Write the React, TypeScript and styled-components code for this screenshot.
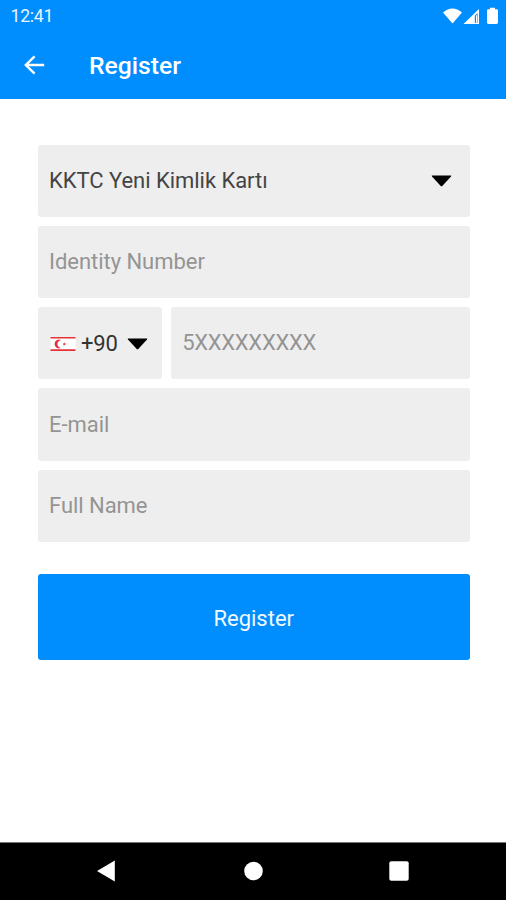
import React from 'react';
import styled, { createGlobalStyle } from 'styled-components';

const GlobalStyle = createGlobalStyle`
  * { box-sizing: border-box; }
  body { margin: 0; background: #fff; font-family: Roboto, sans-serif; }
  svg { display: block; flex: none; }
`;

const Screen = styled.div`
  width: 506px;
  height: 900px;
  display: flex;
  flex-direction: column;
  background: #fff;
  overflow: hidden;
`;

const Header = styled.header`
  height: 98.5px;
  flex: none;
  background: #008eff;
  color: #fff;
`;

const StatusBar = styled.div`
  height: 32px;
  display: flex;
  align-items: center;
  justify-content: space-between;
  padding: 0 7px 1px 10.5px;
`;

const Clock = styled.span`
  font-size: 17.6px;
  line-height: 32px;
  letter-spacing: -0.25px;
  color: #e6f4ff;
`;

const AppBar = styled.div`
  height: 66px;
  display: flex;
  align-items: center;
  padding: 0 0 1px 23px;
  gap: 44px;
`;

const Title = styled.h1`
  margin: 0;
  font-size: 24.7px;
  line-height: 32px;
  font-weight: 500;
  padding-top: 2px;
`;

const BackButton = styled.button`
  display: flex;
  border: 0;
  padding: 0;
  background: none;
`;

const Form = styled.form`
  flex: 1;
  padding: 46px 36.5px 0 38px;
  display: flex;
  flex-direction: column;
  gap: 9px;
`;

const Row = styled.div`
  display: flex;
  gap: 9px;
`;

const Field = styled.div<{ $tone?: string; $tracking?: number }>`
  height: 72.3px;
  flex: 1 0 0;
  display: flex;
  align-items: center;
  justify-content: space-between;
  padding: 0 18px 0 11px;
  border-radius: 3px;
  background: #eee;
  color: ${p => p.$tone ?? '#949494'};
  font-size: 22px;
  line-height: 30px;
  letter-spacing: ${p => p.$tracking ?? -0.04}px;
  white-space: nowrap;
`;

const DialCode = styled(Field)`
  flex: 0 0 124.2px;
  justify-content: flex-start;
  padding: 1px 0 0 12px;
`;

const DialNumber = styled.span`
  margin: 1px 9px 0 5px;
`;

const Submit = styled.button`
  height: 86px;
  margin: 23px -0.5px 0;
  border: 0;
  border-radius: 3px;
  background: #008eff;
  color: #f2f9ff;
  font: 400 22px/30px Roboto, sans-serif;
  padding: 4px 0 0;
`;

const NavBar = styled.nav`
  height: 58.5px;
  flex: none;
  display: flex;
  align-items: center;
  justify-content: space-between;
  padding: 0 97px 0 96px;
  background: #000;
  border-top: 1px solid #777;
`;

const Caret = () => (
  <svg width="21" height="12" viewBox="0 0 21 12">
    <path d="M1 .6H20Q20.6 .8 20 1.6L11.5 10.8Q10.5 11.8 9.5 10.8L1 1.6Q.4 .8 1 .6Z" fill="#000" />
  </svg>
);

const Flag = () => (
  <svg width="26" height="16" viewBox="0 0 26 16">
    <path d="M.5 1h25v14H.5z" fill="#fff" />
    <path d="M.5 1h25v1.6H.5zM.5 13.3h25v1.7H.5z" fill="#e5323a" />
    <path d="M10.8 4A4.4 4.4 0 1 0 10.8 12A5 5 0 0 1 7.2 8A5 5 0 0 1 10.8 4Z" fill="#e5323a" />
    <path d="M14.3 6.3l.5 1.1 1.2.1-.9.8.3 1.2-1.1-.6-1.1.6.3-1.2-.9-.8 1.2-.1z" fill="#e5323a" />
  </svg>
);

const StatusIcons = () => (
  <svg width="57" height="20" viewBox="442 5 57 20" fill="#fff">
    <path d="M443 11.4Q452.5 3.6 462 11.4L452.5 22.5Z" />
    <path fillRule="evenodd" d="M463.5 23L479 8V23ZM474.8 14.6V21.8H477.6V12Z" />
    <path d="M476 14.2h1.1v7.3H476z" />
    <path d="M490 6.7h5v1.6h1.7q1.3 0 1.3 1.3v12q0 1.3-1.3 1.3h-8.4q-1.3 0-1.3-1.3v-12q0-1.3 1.3-1.3H490z" />
  </svg>
);

export default function App() {
  return (
    <Screen>
      <GlobalStyle />
      <Header>
        <StatusBar>
          <Clock>12:41</Clock>
          <StatusIcons />
        </StatusBar>
        <AppBar>
          <BackButton type="button" aria-label="Back">
            <svg width="22" height="20" viewBox="0 0 22 20" fill="none" stroke="#fff" strokeWidth="2.4">
              <path d="M21.2 10H3M11.6 1.3L2.8 10L11.6 18.7" />
            </svg>
          </BackButton>
          <Title>Register</Title>
        </AppBar>
      </Header>
      <Form>
        <Row>
          <Field $tone="#444">KKTC Yeni Kimlik Kartı<Caret /></Field>
        </Row>
        <Row><Field>Identity Number</Field></Row>
        <Row>
          <DialCode $tone="#333" $tracking={-0.2}>
            <Flag />
            <DialNumber>+90</DialNumber>
            <Caret />
          </DialCode>
          <Field $tracking={-0.27}>5XXXXXXXXX</Field>
        </Row>
        <Row><Field>E-mail</Field></Row>
        <Row><Field>Full Name</Field></Row>
        <Submit type="button">Register</Submit>
      </Form>
      <NavBar>
        <svg width="20" height="22" viewBox="0 0 20 22">
          <path d="M1 11L18.8 .5V21.5Z" fill="#fff" />
        </svg>
        <svg width="20" height="20" viewBox="0 0 20 20">
          <circle cx="10.5" cy="10" r="9.3" fill="#fff" />
        </svg>
        <svg width="20" height="20" viewBox="0 0 20 20">
          <rect x=".3" y=".3" width="19.4" height="19.4" rx="2" fill="#fff" />
        </svg>
      </NavBar>
    </Screen>
  );
}
